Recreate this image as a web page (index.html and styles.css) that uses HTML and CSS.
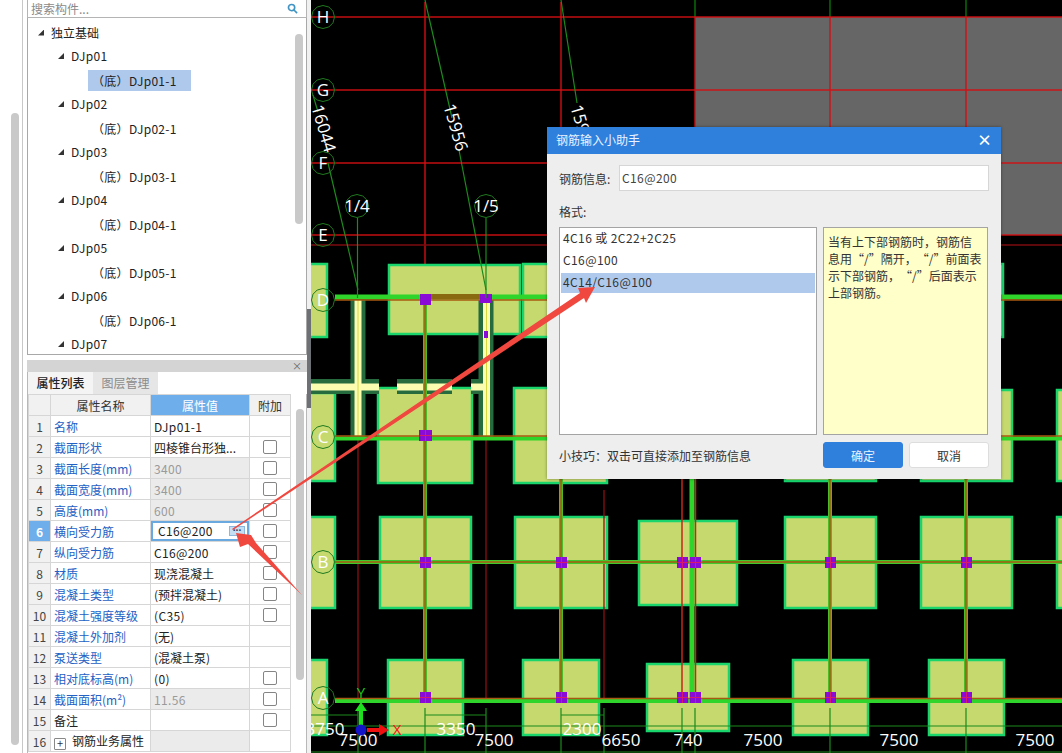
FILE: index.html
```html
<!DOCTYPE html>
<html lang="zh-CN">
<head>
<meta charset="utf-8">
<title>钢筋输入小助手</title>
<link rel="stylesheet" href="styles.css">
</head>
<body>
<div class="app">
  <aside class="sidebar">
    <div class="strip"><div class="strip-thumb"></div></div>
    <div class="panel">
      <div class="search"><span class="search-text">搜索构件...</span>
        <svg class="search-icon" viewBox="0 0 12 12"><circle cx="5" cy="5" r="3.4"/><path d="M7.6 7.6 11 11"/></svg>
      </div>
      <div class="tree-box">
        <div class="tree">
          <div class="node l0"><i class="tri"></i>独立基础</div>
          <div class="node l1"><i class="tri"></i>DJp01</div>
          <div class="node l2"><span class="leaf selected">（底）DJp01-1</span></div>
          <div class="node l1"><i class="tri"></i>DJp02</div>
          <div class="node l2"><span class="leaf">（底）DJp02-1</span></div>
          <div class="node l1"><i class="tri"></i>DJp03</div>
          <div class="node l2"><span class="leaf">（底）DJp03-1</span></div>
          <div class="node l1"><i class="tri"></i>DJp04</div>
          <div class="node l2"><span class="leaf">（底）DJp04-1</span></div>
          <div class="node l1"><i class="tri"></i>DJp05</div>
          <div class="node l2"><span class="leaf">（底）DJp05-1</span></div>
          <div class="node l1"><i class="tri"></i>DJp06</div>
          <div class="node l2"><span class="leaf">（底）DJp06-1</span></div>
          <div class="node l1"><i class="tri"></i>DJp07</div>
        </div>
        <div class="tree-thumb"></div>
      </div>
      <div class="props-head"><span class="props-close">×</span></div>
      <div class="tabs"><div class="tab active">属性列表</div><div class="tab">图层管理</div></div>
      <div class="props-body">
        <table class="props">
          <colgroup><col class="c-no"><col class="c-name"><col class="c-val"><col class="c-add"></colgroup>
          <tr class="head"><th></th><th>属性名称</th><th class="hot">属性值</th><th>附加</th></tr>
          <tr><td class="no">1</td><td class="nm">名称</td><td class="val num">DJp01-1</td><td></td></tr>
          <tr><td class="no">2</td><td class="nm">截面形状</td><td class="val">四棱锥台形独...</td><td><i class="chk"></i></td></tr>
          <tr><td class="no">3</td><td class="nm">截面长度(mm)</td><td class="val ro num">3400</td><td><i class="chk"></i></td></tr>
          <tr><td class="no">4</td><td class="nm">截面宽度(mm)</td><td class="val ro num">3400</td><td><i class="chk"></i></td></tr>
          <tr><td class="no">5</td><td class="nm">高度(mm)</td><td class="val ro num">600</td><td><i class="chk"></i></td></tr>
          <tr><td class="no hot">6</td><td class="nm">横向受力筋</td><td class="val edit num"><div class="edit-box"><span>C16@200</span><b class="more">···</b></div></td><td><i class="chk"></i></td></tr>
          <tr><td class="no">7</td><td class="nm">纵向受力筋</td><td class="val num">C16@200</td><td><i class="chk"></i></td></tr>
          <tr><td class="no">8</td><td class="nm">材质</td><td class="val">现浇混凝土</td><td><i class="chk"></i></td></tr>
          <tr><td class="no">9</td><td class="nm">混凝土类型</td><td class="val">(预拌混凝土)</td><td><i class="chk"></i></td></tr>
          <tr><td class="no">10</td><td class="nm">混凝土强度等级</td><td class="val num">(C35)</td><td><i class="chk"></i></td></tr>
          <tr><td class="no">11</td><td class="nm">混凝土外加剂</td><td class="val">(无)</td><td></td></tr>
          <tr><td class="no">12</td><td class="nm">泵送类型</td><td class="val">(混凝土泵)</td><td></td></tr>
          <tr><td class="no">13</td><td class="nm">相对底标高(m)</td><td class="val num">(0)</td><td><i class="chk"></i></td></tr>
          <tr><td class="no">14</td><td class="nm">截面面积(m²)</td><td class="val ro num">11.56</td><td><i class="chk"></i></td></tr>
          <tr><td class="no">15</td><td class="nm plain">备注</td><td class="val"></td><td><i class="chk"></i></td></tr>
          <tr><td class="no">16</td><td class="nm plain"><i class="plus">+</i>钢筋业务属性</td><td class="val ro"></td><td></td></tr>
        </table>
        <div class="props-track"><div class="props-thumb"></div></div>
      </div>
    </div>
    <div class="gutter"><div class="gutter-thumb"></div></div>
  </aside>

  <main class="canvas">
    <svg class="cad" viewBox="311 0 751 753" width="751" height="753">
      <defs>
        <polygon id="oct" points="0,-11.500 5.800,-10 10,-5.800 11.500,0 10,5.800 5.800,10 0,11.500 -5.800,10 -10,5.800 -11.500,0 -10,-5.800 -5.800,-10"/>
      </defs>
      <rect class="slab" x="695" y="17" width="367" height="218"/>
      <g class="grid-top">
        <path d="M695 0V17M830 0V17M966 0V17"/>
      </g>
      <g class="red">
        <path d="M311 17H1062M311 90H1062M311 163H1062M311 235H1062"/>
        <path d="M425 2V298M561 2V298M695 17V235M830 17V235M966 17V235"/>
      </g>
      <path class="red-dim" d="M311 245H1062"/>

      <g class="foot">
        <rect x="290" y="264" width="37" height="73"/>
        <rect x="389" y="265" width="131" height="69"/>
        <rect x="523" y="264" width="131" height="73"/>
        <rect x="872" y="264" width="131" height="73"/>
        <rect x="290" y="393" width="45" height="88"/>
        <rect x="378" y="388" width="94" height="95"/>
        <rect x="514" y="388" width="93" height="95"/>
        <rect x="785" y="390" width="91" height="91"/>
        <rect x="921" y="390" width="91" height="91"/>
        <rect x="1057" y="390" width="60" height="91"/>
        <rect x="290" y="517" width="45" height="91"/>
        <rect x="380" y="517" width="91" height="91"/>
        <rect x="515" y="517" width="92" height="91"/>
        <rect x="639" y="521" width="98" height="84"/>
        <rect x="785" y="517" width="91" height="91"/>
        <rect x="921" y="517" width="91" height="91"/>
        <rect x="1057" y="517" width="60" height="91"/>
        <rect x="290" y="660" width="37" height="75"/>
        <rect x="388" y="660" width="75" height="75"/>
        <rect x="523" y="660" width="76" height="75"/>
        <rect x="647" y="664" width="82" height="67"/>
        <rect x="793" y="660" width="75" height="75"/>
        <rect x="929" y="660" width="75" height="75"/>
      </g>

      <path class="red-dim2" d="M358 437V700M486 437V700M604 490V700"/>
      <g class="wall">
        <path d="M358 300V437M486 300V437M311 386.500H379M397 386.500H452M471 386.500H484"/>
      </g>
      <g class="wall-in">
        <path d="M358 300V436M486.500 300V436M311 387H379M397 387H452M471 387H483"/>
      </g>
      <path class="wall-core" d="M358 300V436M486.500 300V436"/>

      <g class="beam">
        <path d="M425 300V700M561 300V700M830 300V700M966 300V700"/>
      </g>
      <path class="beam-core" d="M425 300V700M561 300V700M830 300V700M966 300V700"/>
      <path class="beam-h" d="M335 562H1062"/>
      <path class="beam-core" d="M335 562H1062"/>
      <path class="beam-thick" d="M335 297H1062M335 700.500H1062"/>
      <path class="beam-c" d="M335 438.500H1062"/>
      <path class="beam-core" d="M335 300H1062M335 436H1062M335 698.500H1062"/>
      <path class="beam-top" d="M425 296.500H486"/>
      <path class="beam-thick" d="M692 470V698"/>
      <path class="red-thin" d="M682 470V700M695.500 470V700"/>

      <g class="node">
        <rect x="420" y="294" width="11" height="11"/>
        <rect x="480" y="294" width="12" height="9"/>
        <rect x="484" y="331" width="4" height="7"/>
        <rect x="419" y="430" width="13" height="11"/>
        <rect x="420" y="557" width="11" height="11"/>
        <rect x="556" y="557" width="11" height="11"/>
        <rect x="677" y="557" width="11" height="11"/>
        <rect x="690" y="557" width="11" height="11"/>
        <rect x="825" y="557" width="11" height="11"/>
        <rect x="961" y="557" width="11" height="11"/>
        <rect x="420" y="692" width="11" height="11"/>
        <rect x="556" y="692" width="11" height="11"/>
        <rect x="677" y="692" width="11" height="11"/>
        <rect x="690" y="692" width="11" height="11"/>
        <rect x="825" y="692" width="11" height="11"/>
        <rect x="961" y="692" width="11" height="11"/>
      </g>
      <path class="cross" d="M420 562.500H431M425.500 557V568M556 562.500H567M561.500 557V568M677 562.500H688M682.500 557V568M690 562.500H701M695.500 557V568M825 562.500H836M830.500 557V568M961 562.500H972M966.500 557V568M420 697.500H431M425.500 692V703M556 697.500H567M561.500 692V703M677 697.500H688M682.500 692V703M690 697.500H701M695.500 692V703M825 697.500H836M830.500 692V703M961 697.500H972M966.500 692V703M420 435.500H432M425.500 430V441"/>

      <g class="dim">
        <path d="M425 0 452 118M459 150 486 290M561 0 577 103M313 95 318 112M328 163 358 290"/>
        <path d="M357.500 218V298M486 218V298"/>
        <path d="M311 715H358M425 715H486M561 715H604M311 726H1062M311 752H1062"/>
        <path d="M358 708V753M425 708V753M486 708V753M561 708V753M604 708V753M682 708V753M695 708V753M830 708V753M966 708V753"/>
      </g>

      <g class="bubble">
        <use href="#oct" x="323" y="17"/>
        <use href="#oct" x="323" y="90"/>
        <use href="#oct" x="323" y="163"/>
        <use href="#oct" x="323" y="235"/>
        <use href="#oct" x="323" y="300"/>
        <use href="#oct" x="323" y="437"/>
        <use href="#oct" x="323" y="562"/>
        <use href="#oct" x="323" y="698"/>
        <use href="#oct" x="357" y="206"/>
        <use href="#oct" x="486" y="206"/>
      </g>

      <g class="cad-text">
        <text x="323" y="23">H</text>
        <text x="323" y="96">G</text>
        <text x="323" y="169">F</text>
        <text x="323" y="241">E</text>
        <text x="323" y="306">D</text>
        <text x="323" y="443">C</text>
        <text x="323" y="568">B</text>
        <text x="323" y="704">A</text>
        <text x="357" y="212">1/4</text>
        <text x="486" y="212">1/5</text>
        <text transform="translate(318 130) rotate(74)">16044</text>
        <text transform="translate(450 129) rotate(74)">15956</text>
        <text transform="translate(577 130) rotate(74)">15956</text>
        <text x="325" y="735">3750</text>
        <text x="358" y="746">7500</text>
        <text x="456" y="735">3350</text>
        <text x="494" y="746">7500</text>
        <text x="582" y="735">2300</text>
        <text x="621" y="746">6650</text>
        <text x="688" y="746">740</text>
        <text x="763" y="746">7500</text>
        <text x="899" y="746">7500</text>
        <text x="1035" y="746">7500</text>
      </g>

      <g class="gizmo">
        <text class="giz-y" x="361" y="698">Y</text>
        <path class="giz-g" d="M359 725V711H355L361 702 367 711H363V725Z"/>
        <path class="giz-r" d="M367 728H379V724L389 730 379 736V732H367Z"/>
        <circle class="giz-b" cx="361" cy="730" r="5.500"/>
        <text class="giz-x" x="397" y="735">X</text>
      </g>
    </svg>

    <section class="dialog">
      <header class="dlg-title"><span>钢筋输入小助手</span><span class="dlg-close">×</span></header>
      <div class="dlg-body">
        <div class="dlg-field"><label>钢筋信息:</label><div class="dlg-input">C16@200</div></div>
        <div class="dlg-format">格式:</div>
        <div class="dlg-main">
          <ul class="dlg-list">
            <li>4C16 或 2C22+2C25</li>
            <li>C16@100</li>
            <li class="on">4C14/C16@100</li>
          </ul>
          <div class="dlg-note">当有上下部钢筋时，钢筋信<br>息用“/”隔开，“/”前面表<br>示下部钢筋，“/”后面表示<br>上部钢筋。</div>
        </div>
        <div class="dlg-foot">
          <div class="dlg-tip">小技巧：双击可直接添加至钢筋信息</div>
          <div class="btn primary">确定</div>
          <div class="btn">取消</div>
        </div>
      </div>
    </section>
  </main>

  <svg class="marks" viewBox="0 0 1062 753" width="1062" height="753">
    <polygon class="mark" points="232,529 580,293 578,288 595,287 586,303 584,298 233,530"/>
    <polygon class="mark" points="302,595 256,543 251,535 236,533 240,547 248,544"/>
  </svg>
</div>
</body>
</html>
```
FILE: styles.css
```css
* { box-sizing: border-box; }
html, body { margin: 0; padding: 0; }
body {
  width: 1062px;
  height: 753px;
  overflow: hidden;
  background: #fff;
  font-family: "Noto Sans CJK SC", "Open Sans", sans-serif;
  font-size: 12px;
  color: #222;
  text-spacing-trim: space-all;
}
.app { position: relative; display: flex; width: 1062px; height: 753px; }

/* Sidebar */
.sidebar { display: flex; width: 311px; height: 753px; flex: none; }
.strip { width: 27px; flex: none; padding: 113px 0 0 11px; background: linear-gradient(to right, #fff 22px, #c8c8c8 22px, #c8c8c8 23px, #fff 23px); }
.strip-thumb { width: 8px; height: 632px; background: #c9c9c9; border-radius: 4px; }
.panel { width: 280px; flex: none; display: flex; flex-direction: column; }
.gutter { width: 4px; flex: none; padding-top: 309px; background: #f0f0f0; }
.gutter-thumb { height: 99px; background: #6d7074; }

.search { height: 18px; display: flex; align-items: center; justify-content: space-between; padding: 0 8px 0 3px; border: 1px solid #b4b4b4; border-width: 0 1px 1px; }
.search-text { color: #8a8a8a; line-height: 17px; }
.search-icon { width: 11px; height: 11px; fill: none; stroke: #3f94c4; stroke-width: 1.8; }

.tree-box { height: 337px; display: flex; border: 1px solid #a8a8a8; border-top: 0; overflow: hidden; background: #fff; }
.tree { flex: 1; padding-top: 2px; min-width: 0; }
.node { height: 24px; line-height: 24px; display: flex; align-items: center; white-space: nowrap; color: #222; letter-spacing: .3px; }
.l0 { padding-left: 10px; letter-spacing: 0; padding-top: 1px; }
.l1 { padding-left: 30px; }
.l2 { padding-left: 60px; }
.tri { width: 6px; height: 6px; margin-right: 7px; background: #333; clip-path: polygon(100% 0, 100% 100%, 0 100%); flex: none; }
.leaf { display: inline-block; width: 103px; height: 21px; line-height: 21px; padding-left: 4px; }
.selected { background: #aec9ec; }
.tree-thumb { width: 8px; height: 190px; margin: 16px 3px 0 0; background: #c9c9c9; border-radius: 4px; flex: none; }

.props-head { margin-top: 5px; height: 12px; background: #d4d4d4; display: flex; justify-content: flex-end; align-items: center; padding-right: 5px; }
.props-close { color: #666; font-size: 10px; line-height: 12px; }
.tabs { height: 22px; display: flex; background: #fff; border-left: 1px solid #b8b8b8; }
.tab { width: 65px; height: 22px; line-height: 22px; text-align: center; color: #8b8b8b; background: #e6e6e6; }
.tab.active { color: #222; background: #f4f4f4; font-weight: 500; }

.props-body { flex: 1; display: flex; border: 1px solid #b8b8b8; border-width: 0 1px; background: #fff; overflow: hidden; }
.props { table-layout: fixed; width: 262px; border-collapse: collapse; flex: none; align-self: flex-start; }
.c-no { width: 22px; }
.c-name { width: 100px; }
.c-val { width: 99px; }
.c-add { width: 41px; }
.props th, .props td { height: 21px; padding: 0; border: 1px solid #d6d6d6; font-weight: 400; white-space: nowrap; overflow: hidden; line-height: 17px; }
.props th { background: #f1f1f1; color: #333; text-align: center; }
.props th.hot { background: #6eaeea; color: #fff; }
.props td.no { background: #f1f1f1; text-align: center; color: #444; }
.props td.no.hot { background: #6eaeea; color: #fff; font-weight: 700; }
.props td.nm { padding-left: 3px; color: #2461c4; }
.props td.nm.plain { color: #222; }
.props td.val { padding-left: 3px; color: #222; }
.props td.num { letter-spacing: .35px; }
.props td.val.ro { background: #ebebeb; color: #9a9a9a; }
.props td.val.edit { padding: 0; }
.edit-box { height: 20px; border: 2px solid #6aa8e0; display: flex; align-items: center; justify-content: space-between; padding: 0 2px 0 5px; background: #fff; line-height: 16px; }
.more { width: 16px; height: 10px; background: #c6def2; color: #335; font-family: "Open Sans", sans-serif; font-size: 10px; line-height: 7px; text-align: center; font-weight: 700; border: 1px solid #8cb8de; letter-spacing: 0; }
.chk { display: block; width: 14px; height: 14px; margin: auto; border: 1px solid #858585; border-radius: 2px; background: #fff; }
.plus { display: inline-block; width: 12px; height: 12px; margin: 0 6px 0 0; border: 1px solid #888; border-radius: 1px; font-style: normal; line-height: 9px; text-align: center; vertical-align: -2px; color: #333; font-size: 11px; }
.props-track { flex: 1; padding: 15px 0 0 5px; }
.props-thumb { width: 8px; height: 271px; border-radius: 4px; background: #c9c9c9; }

/* CAD canvas */
.canvas { position: relative; width: 751px; height: 753px; background: #000; flex: none; overflow: hidden; }
.cad { display: block; }
.cad path, .cad polygon { fill: none; }
.slab { fill: #666; }
.grid-top path { stroke: #0b7a0b; stroke-width: 1.300; }
.red path { stroke: #d40f14; stroke-width: 1.500; opacity: .92; }
.red-dim { stroke: #7d0b0e; stroke-width: 1.300; }
.red-dim2 { stroke: #8a1010; stroke-width: 1.300; }
.red-thin { stroke: #c5281a; stroke-width: 1.500; }
.foot rect { fill: #c5d96f; stroke: #19d56c; stroke-width: 2.500; }
.wall path { stroke: #256b3e; stroke-width: 15; }
.wall-in path { stroke: #fbfcb0; stroke-width: 7; }
.wall-core { stroke: #d6d840; stroke-width: 1; }
.beam path { stroke: #4ebc28; stroke-width: 4; }
.cad .beam-core { stroke: #a85a12; stroke-width: 1.500; }
.cad .beam-h { stroke: #3fc92c; stroke-width: 4; }
.cad .beam-thick { stroke: #2fd52b; stroke-width: 5; }
.cad .beam-c { stroke: #2fd52b; stroke-width: 4; }
.cad .beam-top { stroke: #8a6a10; stroke-width: 5; }
.node rect { fill: #8a0bd6; }
.cad .cross { stroke: #d81a6a; stroke-width: 1; }
.dim path { stroke: #1c8a1c; stroke-width: 1.200; }
.bubble use { fill: none; stroke: #1f7a1f; stroke-width: 1; }
.cad-text text { fill: #fff; font-family: "Open Sans", sans-serif; font-size: 17px; text-anchor: middle; font-weight: 400; }
.giz-y { fill: #19c919; font-family: "Open Sans", sans-serif; font-size: 15px; text-anchor: middle; }
.giz-x { fill: #f01010; font-family: "Open Sans", sans-serif; font-size: 15px; text-anchor: middle; }
.cad .giz-g { fill: #1fe01f; }
.cad .giz-r { fill: #f01010; }
.giz-b { fill: #1414c8; }

/* Dialog */
.dialog { position: absolute; left: 236px; top: 127px; width: 454px; height: 352px; background: #eeeeee; box-shadow: 0 0 3px rgba(0,0,0,.4); display: flex; flex-direction: column; }
.dlg-title { height: 27px; flex: none; background: #2f7fdd; color: #eaf3ff; display: flex; align-items: center; justify-content: space-between; padding: 0 9px 1px; line-height: 16px; }
.dlg-close { color: #fff; font-size: 15px; font-weight: 700; line-height: 16px; }
.dlg-body { flex: 1; padding: 11px 12px 0; display: flex; flex-direction: column; }
.dlg-field { display: flex; align-items: center; height: 26px; }
.dlg-field label { width: 60px; flex: none; color: #333; }
.dlg-input { width: 370px; height: 26px; line-height: 24px; padding-left: 2px; background: #fff; border: 1px solid #d6d6d6; color: #444; letter-spacing: .4px; }
.dlg-format { margin-top: 12px; height: 17px; line-height: 17px; color: #333; }
.dlg-main { margin-top: 7px; display: flex; gap: 6px; height: 208px; }
.dlg-list { list-style: none; margin: 0; padding: 0 1px; width: 258px; flex: none; background: #fff; border: 1px solid #a4a4a4; letter-spacing: .4px; }
.dlg-list li { height: 22px; line-height: 20px; padding-left: 2px; color: #333; }
.dlg-list li.on { height: 20px; line-height: 18px; margin-top: 1px; background: #aec9ec; }
.dlg-note { width: 165px; flex: none; background: #ffffc9; border: 1px solid #a4a4a4; padding: 5px 4px; line-height: 17px; color: #333; white-space: nowrap; }
.dlg-foot { margin-top: 7px; display: flex; align-items: center; height: 26px; gap: 6px; }
.dlg-tip { width: 258px; flex: none; color: #333; }
.btn { width: 80px; height: 26px; line-height: 25px; text-align: center; border: 1px solid #ddd; border-radius: 3px; background: #fff; color: #333; }
.btn.primary { background: #2f7fdd; border-color: #2f7fdd; color: #e8f2ff; }

.marks { position: absolute; left: 0; top: 0; pointer-events: none; }
.mark { fill: #f0473f; }
```
